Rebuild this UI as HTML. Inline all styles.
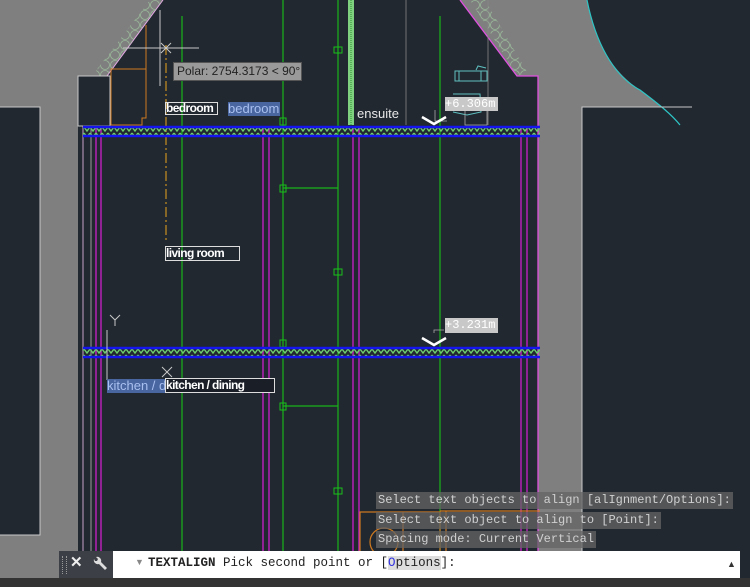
<!DOCTYPE html>
<html><head><meta charset="utf-8"><style>
html,body{margin:0;padding:0;width:750px;height:587px;overflow:hidden;background:#212830;}
svg{position:absolute;left:0;top:0}
.cmd{position:absolute;font-family:"Liberation Mono",monospace;font-size:12px;color:#d0d0d0;background:rgba(100,100,100,0.75);height:17px;line-height:17px;padding:0 2px;white-space:pre;}
</style></head><body>
<svg width="750" height="587" viewBox="0 0 750 587">
<defs>
<pattern id="zz" width="6" height="6" patternUnits="userSpaceOnUse"><path d="M0,1 L3,5 L6,1" fill="none" stroke="#6fcf6f" stroke-width="1.4"/></pattern>
<pattern id="loops" width="10" height="10" patternUnits="userSpaceOnUse"><circle cx="5" cy="5" r="4.5" fill="none" stroke="#9fc89f" stroke-width="0.8"/></pattern>
</defs>
<path d="M0,0 L163,0 L107,76 L78,76 L78,587 L0,587 L0,107 Z" fill="#7f7f7f"/>
<rect x="0" y="107" width="40" height="428" fill="#212830"/>
<path d="M0,107 L40,107 L40,535 L0,535" fill="none" stroke="#c8c8c8" stroke-width="1"/>
<path d="M163,0 L107,76" stroke="#e6a8e6" stroke-width="1"/>
<path d="M150,0 L163,0 L107,76 L92,76 Z" fill="url(#loops)" opacity="0.8"/>
<rect x="78" y="76" width="32" height="50" fill="#212830" stroke="#c8c8c8" stroke-width="1"/>
<path d="M111,69 L146,69 L146,118 L142,118 L142,125 L111,125 Z" fill="none" stroke="#d07a20" stroke-width="1"/>
<path d="M146,25 L146,118" stroke="#d07a20" stroke-width="1"/>
<path d="M460,0 L587,0 C595,40 610,70 640,90 L662,107 L582,107 L582,587 L538,587 L538,76 L517,76 Z" fill="#7f7f7f"/>
<path d="M587,0 C595,40 612,75 640,90 C660,105 672,115 680,125" fill="none" stroke="#2ec5c5" stroke-width="1.2"/>
<path d="M582,587 L582,107 L692,107" fill="none" stroke="#c8c8c8" stroke-width="1"/>
<path d="M460,0 L517,76 L538,76 L538,587" fill="none" stroke="#e050e0" stroke-width="1.3"/>
<path d="M470,0 L485,0 L527,72 L517,76 Z" fill="url(#loops)" opacity="0.8"/>
<g stroke="#c020c0" stroke-width="1.4">
<line x1="96" y1="126" x2="96" y2="587"/><line x1="101" y1="126" x2="101" y2="587"/>
<line x1="263" y1="126" x2="263" y2="587"/><line x1="269" y1="126" x2="269" y2="587"/>
<line x1="353" y1="126" x2="353" y2="587"/><line x1="359" y1="126" x2="359" y2="587"/>
<line x1="521" y1="126" x2="521" y2="587"/><line x1="527" y1="126" x2="527" y2="587"/>
</g>
<line x1="83" y1="126" x2="83" y2="587" stroke="#c8a0c8" stroke-width="1"/>
<line x1="91" y1="126" x2="91" y2="587" stroke="#bbb" stroke-width="0.8"/>
<g stroke="#19b319" stroke-width="1.2">
<line x1="182" y1="16" x2="182" y2="587"/>
<line x1="283" y1="0" x2="283" y2="587"/>
<line x1="338" y1="0" x2="338" y2="587"/>
<line x1="440" y1="16" x2="440" y2="587"/>
<line x1="283" y1="188" x2="338" y2="188"/>
<line x1="283" y1="406" x2="338" y2="406"/>
</g>
<rect x="348" y="0" width="6" height="125" fill="#7fd07f"/>
<line x1="351" y1="0" x2="351" y2="125" stroke="#2d8f2d" stroke-width="1" stroke-dasharray="1,1"/>
<line x1="406" y1="0" x2="406" y2="125" stroke="#888" stroke-width="0.8"/>
<line x1="488" y1="0" x2="488" y2="125" stroke="#888" stroke-width="0.8"/>
<g fill="none" stroke="#19c019" stroke-width="1">
<rect x="280" y="118" width="6" height="7"/><rect x="280" y="185" width="6" height="7"/><rect x="280" y="340" width="6" height="7"/><rect x="280" y="403" width="6" height="7"/>
<rect x="334" y="47" width="8" height="6"/><rect x="334" y="269" width="8" height="6"/><rect x="334" y="488" width="8" height="6"/>
</g>
<line x1="166" y1="45" x2="166" y2="240" stroke="#c89020" stroke-width="1.2" stroke-dasharray="10,3,2,3"/>
<rect x="83" y="128" width="457" height="8" fill="url(#zz)"/>
<line x1="83" y1="127" x2="540" y2="127" stroke="#1515f0" stroke-width="2.5"/>
<line x1="83" y1="136" x2="540" y2="136" stroke="#1515f0" stroke-width="2.5"/>
<rect x="83" y="349" width="457" height="8" fill="url(#zz)"/>
<line x1="83" y1="348" x2="540" y2="348" stroke="#1515f0" stroke-width="2.5"/>
<line x1="83" y1="357" x2="540" y2="357" stroke="#1515f0" stroke-width="2.5"/>
<g stroke="#c8c8c8" stroke-width="1" fill="none">
<line x1="123" y1="48" x2="199" y2="48"/><line x1="160" y1="10" x2="160" y2="86"/>
<line x1="161" y1="43" x2="171" y2="53"/><line x1="171" y1="43" x2="161" y2="53"/>
<line x1="107" y1="330" x2="107" y2="380"/>
<path d="M110,315 L115,320 L120,315 M115,320 L115,326"/>
<line x1="162" y1="367" x2="172" y2="377"/><line x1="172" y1="367" x2="162" y2="377"/>
</g>
<g fill="none" stroke="#5fc0c0" stroke-width="1">
<rect x="455" y="71" width="32" height="10"/><line x1="459" y1="71" x2="459" y2="81"/><line x1="481" y1="71" x2="481" y2="81"/>
<path d="M476,70 L478,66 L486,68"/>
<path d="M453,94 L480,94 L481,112 L467,115 L453,112"/>
</g>
<path d="M435,110 L435,121 L447,121 M465,110 L465,125 L487,125 L487,110" fill="none" stroke="#aaa" stroke-width="0.8"/>
<path d="M422,117 L434,124 L446,117" fill="none" stroke="#fff" stroke-width="2.5"/>
<path d="M422,338 L434,345 L446,338" fill="none" stroke="#fff" stroke-width="2.5"/>
<path d="M434,333 L434,330 L444,330" fill="none" stroke="#aaa" stroke-width="0.8"/>
<g fill="none" stroke="#d07a20" stroke-width="1.2">
<rect x="360" y="512" width="80" height="40"/><path d="M440,511 L540,511"/><line x1="446" y1="511" x2="446" y2="552"/>
<circle cx="384" cy="542" r="14"/><line x1="403" y1="512" x2="403" y2="552"/>
</g>
</svg>
<div style="position:absolute;left:173px;top:62px;width:129px;height:19px;background:#9a9a9a;border:1px solid #555;box-sizing:border-box;font:12px 'Liberation Sans',sans-serif;color:#222;line-height:17px;padding-left:3px">Polar: 2754.3173 &lt; 90°</div>
<div style="position:absolute;left:165px;top:102px;width:53px;height:13px;border:1px solid #ddd;box-sizing:border-box;font:bold 12px 'Liberation Sans',sans-serif;color:#fff;line-height:11px;letter-spacing:-0.6px">bedroom</div>
<div style="position:absolute;left:228px;top:102px;width:52px;height:14px;background:#4a66a0;font:13px 'Liberation Sans',sans-serif;color:#a8c0f0;line-height:14px">bedroom</div>
<div style="position:absolute;left:357px;top:106px;font:13px 'Liberation Sans',sans-serif;color:#e8e8e8">ensuite</div>
<div style="position:absolute;left:445px;top:97px;width:53px;height:14px;background:#c8c8c8;font:12px 'Liberation Mono',monospace;color:#fff;line-height:14px">+6.306m</div>
<div style="position:absolute;left:445px;top:318px;width:53px;height:15px;background:#c8c8c8;font:12px 'Liberation Mono',monospace;color:#fff;line-height:15px">+3.231m</div>
<div style="position:absolute;left:165px;top:246px;width:75px;height:15px;border:1px solid #ddd;box-sizing:border-box;font:bold 12px 'Liberation Sans',sans-serif;color:#fff;line-height:13px;letter-spacing:-0.6px">living room</div>
<div style="position:absolute;left:107px;top:379px;width:60px;height:14px;background:#4a66a0;font:13px 'Liberation Sans',sans-serif;color:#a8c0f0;line-height:14px;overflow:hidden;white-space:nowrap">kitchen / di</div>
<div style="position:absolute;left:165px;top:378px;width:110px;height:15px;border:1px solid #ddd;box-sizing:border-box;background:#1a1f27;font:bold 12px 'Liberation Sans',sans-serif;color:#fff;line-height:13px;letter-spacing:-0.6px">kitchen / dining</div>
<div class="cmd" style="left:376px;top:492px">Select text objects to align [alIgnment/Options]:</div>
<div class="cmd" style="left:376px;top:512px">Select text object to align to [Point]:</div>
<div class="cmd" style="left:376px;top:531px">Spacing mode: Current Vertical</div>
<div style="position:absolute;left:0;top:578px;width:750px;height:9px;background:#333;"></div>
<div style="position:absolute;left:59px;top:551px;width:54px;height:27px;background:#3c3f45"></div>
<div style="position:absolute;left:62px;top:556px;width:3px;height:18px;border-left:1px dotted #999;border-right:1px dotted #999"></div>
<div style="position:absolute;left:70px;top:553px;font:bold 15px 'Liberation Sans',sans-serif;color:#eee">✕</div>
<svg style="left:92px;top:556px" width="16" height="16" viewBox="0 0 16 16"><path d="M2,3 A4,4 0 0 0 7,8 L13,14 L15,12 L9,6 A4,4 0 0 0 4,1 L6,3 L5,5 L3,5 Z" fill="#ddd"/></svg>
<div style="position:absolute;left:113px;top:551px;width:627px;height:27px;background:#fff;"></div>
<div style="position:absolute;left:135px;top:557px;font:9px 'Liberation Sans',sans-serif;color:#888">▼</div>
<div style="position:absolute;left:148px;top:556px;font:12.5px 'Liberation Mono',monospace;color:#222;white-space:pre"><b>TEXTALIGN</b> Pick second point or [<span style="background:#ddd;"><span style="color:#3030e0">O</span>ptions</span>]:</div>
<div style="position:absolute;left:727px;top:559px;font:9px 'Liberation Sans',sans-serif;color:#333">▲</div>
</body></html>
